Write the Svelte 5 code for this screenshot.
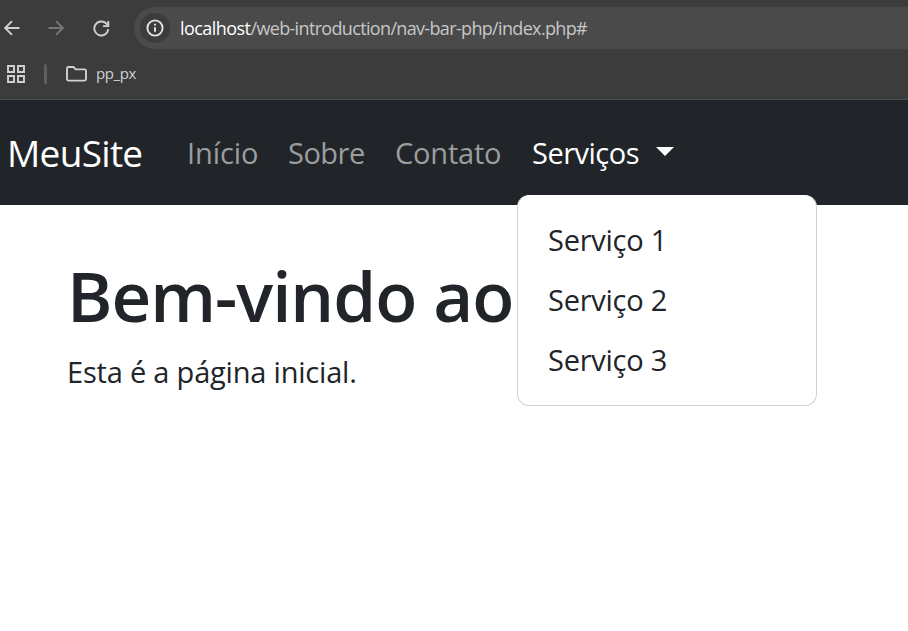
<script>
  const links = [
    { label: 'Início', key: 'home' },
    { label: 'Sobre', key: 'about' },
    { label: 'Contato', key: 'contact' }
  ];
  const services = ['Serviço 1', 'Serviço 2', 'Serviço 3'];
</script>

<div class="window">
  <header class="chrome">
    <div class="toolbar">
      <svg class="back" width="16" height="16" viewBox="0 0 16 16"><path d="M15.5 8H1.5M8 1.2 1.2 8 8 14.8" /></svg>
      <svg class="forward" width="16" height="16" viewBox="0 0 16 16"><path d="M.5 8h14M8 1.2 14.8 8 8 14.8" /></svg>
      <svg class="reload" width="17" height="17" viewBox="0 0 17 17"><path d="M15.3 9.2A7 7 0 1 1 13.4 3.6L15.3 5.5M15.3 1v5.1h-5.2" /></svg>
      <div class="address">
        <span class="info">
          <svg width="18" height="18" viewBox="0 0 18 18"><circle cx="9" cy="9" r="7.6" /><path d="M9 8.2v4.6M9 4.8v1.8" /></svg>
        </span>
        <span class="url"><b>localhost</b>/web-introduction/nav-bar-php/index.php#</span>
      </div>
    </div>
    <div class="bookmarks">
      <svg class="apps" width="18" height="18" viewBox="0 0 18 18"><path d="M1 1h6v6H1zM11 1h6v6h-6zM1 11h6v6H1zM11 11h6v6h-6z" /></svg>
      <i class="divider"></i>
      <svg class="folder" width="21" height="16" viewBox="0 0 21 16"><path d="M2.5 1h5l2.2 2.4h8.8a1.5 1.5 0 0 1 1.5 1.5v8.2a1.5 1.5 0 0 1-1.5 1.5h-16A1.5 1.5 0 0 1 1 13.1V2.5A1.5 1.5 0 0 1 2.5 1z" /></svg>
      <span class="folder-name">pp_px</span>
    </div>
  </header>

  <nav class="navbar">
    <span class="brand">MeuSite</span>
    {#each links as link}
      <span class="link {link.key}">{link.label}</span>
    {/each}
    <div class="dropdown">
      <span class="link services">Serviços</span>
      <i class="caret"></i>
      <div class="menu">
        {#each services as service}
          <span class="item">{service}</span>
        {/each}
      </div>
    </div>
  </nav>

  <main>
    <h1>Bem-vindo ao</h1>
    <p>Esta é a página inicial.</p>
  </main>
</div>

<style>
  :global(body) { margin: 0; background: #fff; }
  .window {
    width: 908px;
    height: 631px;
    overflow: hidden;
    background: #fff;
    color: #212529;
    font-family: "Open Sans", "Noto Sans", sans-serif;
    font-size: 29px;
    white-space: nowrap;
  }
  svg { display: block; flex: none; fill: none; stroke: #d0d0d0; stroke-width: 1.9; }
  .chrome {
    box-sizing: border-box;
    height: 100px;
    padding-top: 7px;
    background: #3c3c3c;
    border-bottom: 1px solid #4a4c4e;
  }
  .toolbar { display: flex; align-items: center; height: 42px; }
  .back { margin-left: 4px; }
  .forward { margin-left: 28px; stroke: #777; }
  .reload { margin-left: 29px; }
  .address {
    display: flex;
    align-items: center;
    flex: 1;
    box-sizing: border-box;
    height: 42px;
    margin-left: 24px;
    padding-left: 6px;
    border-radius: 21px 0 0 21px;
    background: #4a4a4a;
  }
  .info {
    display: flex;
    align-items: center;
    justify-content: center;
    width: 30px;
    height: 30px;
    border-radius: 50%;
    background: #3c3c3c;
  }
  .info svg { stroke: #e6e6e6; }
  .url { margin-left: 10px; font-size: 18px; line-height: 42px; letter-spacing: -0.66px; color: #c7c7c7; }
  .url b { font-weight: 400; letter-spacing: -0.55px; color: #fff; }
  .bookmarks { display: flex; align-items: center; height: 50px; }
  .apps { margin-left: 7px; }
  .divider { width: 3px; height: 20px; margin-left: 19px; border-radius: 2px; background: #5e5e5e; }
  .folder { margin-left: 19px; }
  .folder-name { margin: -2px 0 0 9px; font-size: 15px; letter-spacing: -0.4px; color: #d0d0d0; }

  .navbar { display: flex; height: 105px; background: #212529; line-height: 105px; }
  .brand { width: 180px; padding-left: 7px; font-size: 37px; letter-spacing: -0.7px; color: #fff; }
  .link { color: #9b9d9f; }
  .home { width: 101px; letter-spacing: -0.1px; }
  .about { width: 107px; letter-spacing: -0.5px; }
  .contact { width: 137px; letter-spacing: -0.2px; }
  .dropdown { position: relative; display: flex; align-items: center; }
  .services { width: 124px; letter-spacing: -0.5px; color: #fff; }
  .caret { border: 9px solid transparent; border-top-color: #fff; border-bottom: 0; margin-top: -2px; }
  .menu {
    position: absolute;
    top: 95px;
    left: -15px;
    box-sizing: border-box;
    width: 300px;
    height: 211px;
    padding: 14px 30px;
    border: 1px solid #d0d1d2;
    border-top-color: #fff;
    border-radius: 12px;
    background: #fff;
  }
  .item { display: block; height: 60px; line-height: 60px; letter-spacing: -0.25px; color: #212529; }
  main { padding: 45px 67px; }
  h1 { margin: 0; font-size: 69px; font-weight: 600; line-height: 90px; letter-spacing: -1px; }
  p { margin: 9px 0 0; line-height: 45px; letter-spacing: -0.2px; }
</style>
